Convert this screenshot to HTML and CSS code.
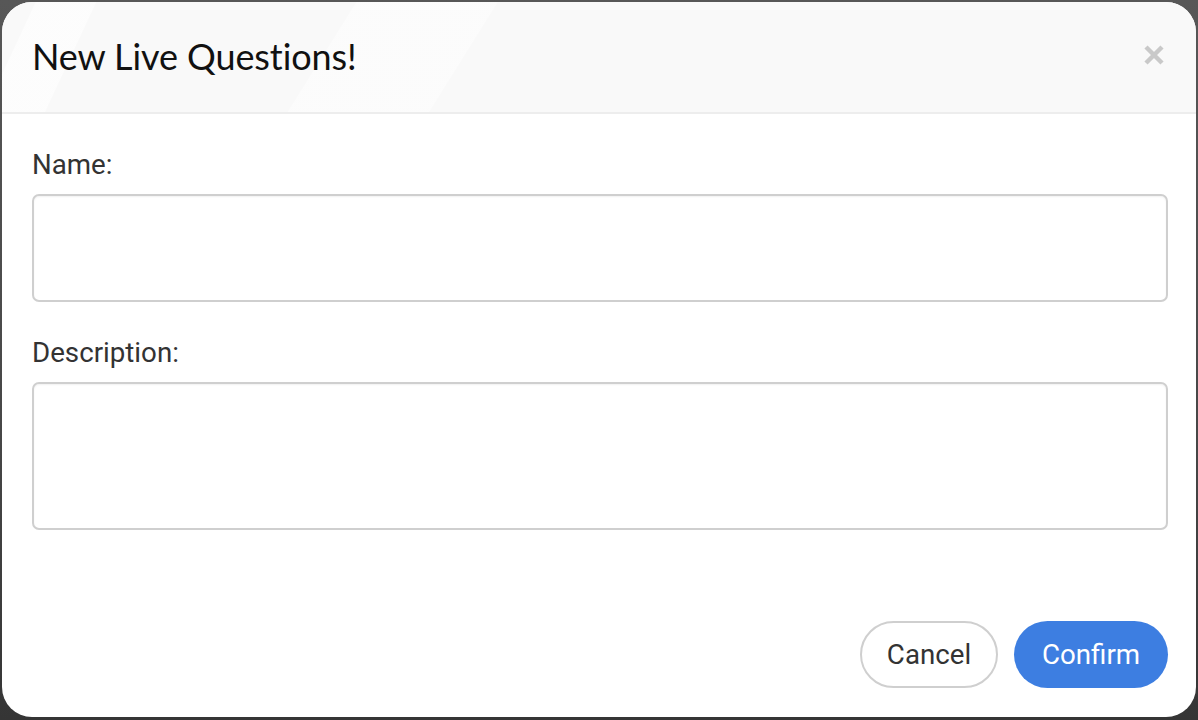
FILE: index.html
```html
<!DOCTYPE html>
<html lang="en">
<head>
<meta charset="utf-8">
<title>New Live Questions!</title>
<link rel="stylesheet" href="styles.css">
</head>
<body>
<div class="modal">
  <div class="modal-header">
    <h1 class="modal-title">New Live Questions!</h1>
    <button class="close" aria-label="Close">
      <svg width="22" height="22" viewBox="0 0 22 22"><path d="M3 3 L19 19 M19 3 L3 19" stroke="#c9c9c9" stroke-width="4.5" stroke-linecap="butt"/></svg>
    </button>
  </div>
  <div class="modal-body">
    <label class="field-label">Name:</label>
    <input class="field-input" type="text">
    <label class="field-label">Description:</label>
    <textarea class="field-area"></textarea>
  </div>
  <div class="modal-footer">
    <button class="btn btn-cancel">Cancel</button>
    <button class="btn btn-confirm">Confirm</button>
  </div>
</div>
</body>
</html>
```
FILE: styles.css
```css
html, body {
  margin: 0;
  padding: 0;
  height: 100%;
}
body {
  background: linear-gradient(to bottom, #575757 0%, #474747 60%, #353535 100%);
  padding: 2px 2px 3px 2px;
  box-sizing: border-box;
  overflow: hidden;
  font-family: Roboto, "Liberation Sans", sans-serif;
}
.modal {
  height: 715px;
  background: #fff;
  border-radius: 30px;
  overflow: hidden;
  display: flex;
  flex-direction: column;
}
.modal-header {
  height: 110px;
  flex: none;
  background:
    linear-gradient(115deg, rgba(255,255,255,0) 0px, rgba(255,255,255,0) 30px, rgba(255,255,255,0.6) 31px, rgba(255,255,255,0.6) 85px, rgba(255,255,255,0) 86px),
    linear-gradient(122deg, rgba(255,255,255,0) 0px, rgba(255,255,255,0) 300px, rgba(255,255,255,0.45) 301px, rgba(255,255,255,0.45) 420px, rgba(255,255,255,0) 421px),
    #f9f9f9;
  border-bottom: 2px solid #ededed;
  display: flex;
  align-items: center;
  justify-content: space-between;
  padding: 0 30px 0 30px;
}
.modal-title {
  margin: 0;
  font-family: Lato, "Open Sans", sans-serif;
  font-weight: 400;
  font-size: 36px;
  color: #111;
  letter-spacing: -0.1px;
  padding-bottom: 2px;
}
.close {
  border: 0;
  background: none;
  padding: 0;
  margin-right: 1px;
  margin-bottom: 5px;
  width: 22px;
  height: 22px;
  cursor: pointer;
}
.close svg { display: block; }
.modal-body {
  padding: 36px 28px 0 30px;
  display: flex;
  flex-direction: column;
}
.field-label {
  font-size: 27.7px;
  color: #333;
  line-height: 30px;
  margin-bottom: 14px;
}
.field-input, .field-area {
  box-sizing: border-box;
  width: 100%;
  border: 2px solid #cfcfcf;
  border-radius: 7px;
  box-shadow: inset 0 1px 2px rgba(0,0,0,0.06);
  background: #fff;
  font-family: inherit;
  font-size: 22px;
  margin: 0;
  outline: none;
  resize: none;
}
.field-input {
  height: 108px;
  margin-bottom: 36px;
}
.field-area {
  height: 148px;
}
.modal-footer {
  margin-top: auto;
  padding: 0 28px 29px 30px;
  display: flex;
  justify-content: flex-end;
  gap: 16px;
}
.btn {
  height: 67px;
  border-radius: 34px;
  font-family: Roboto, "Liberation Sans", sans-serif;
  font-size: 27.7px;
  padding: 0;
  cursor: pointer;
}
.btn-cancel {
  background: #fff;
  color: #333;
  border: 2px solid #cfcfcf;
  width: 138px;
}
.btn-confirm {
  background: #3d7ee1;
  color: #fff;
  border: 0;
  width: 154px;
}
```
